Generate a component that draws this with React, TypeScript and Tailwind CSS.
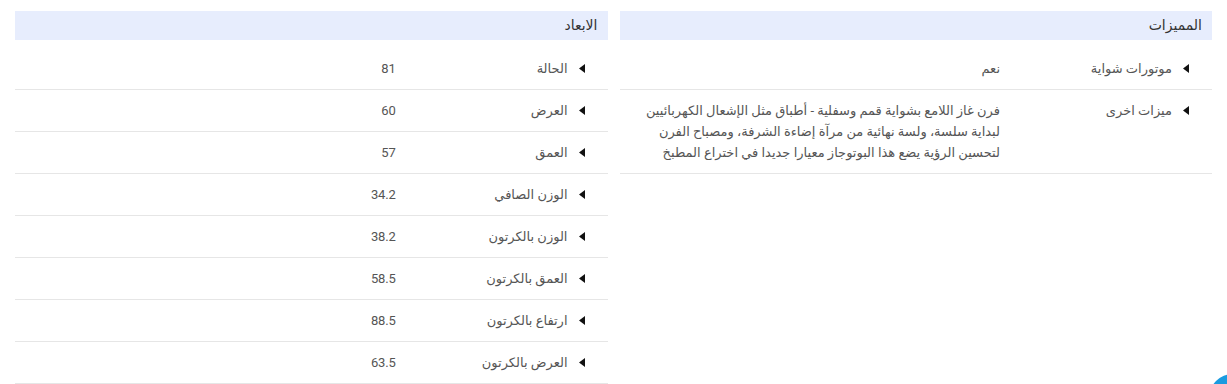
import React from "react";

type Row = { label: string; value: string };

const features: Row[] = [
  { label: "موتورات شواية", value: "نعم" },
  {
    label: "ميزات اخرى",
    value:
      "فرن غاز اللامع بشواية قمم وسفلية - أطباق مثل الإشعال الكهربائيين لبداية سلسة، ولسة نهائية من مرآة إضاءة الشرفة، ومصباح الفرن لتحسين الرؤية يضع هذا البوتوجاز معيارا جديدا في اختراع المطبخ",
  },
];

const dimensions: Row[] = [
  { label: "الحالة", value: "81" },
  { label: "العرض", value: "60" },
  { label: "العمق", value: "57" },
  { label: "الوزن الصافي", value: "34.2" },
  { label: "الوزن بالكرتون", value: "38.2" },
  { label: "العمق بالكرتون", value: "58.5" },
  { label: "ارتفاع بالكرتون", value: "88.5" },
  { label: "العرض بالكرتون", value: "63.5" },
];

function Arrow() {
  return (
    <svg width="6" height="9" viewBox="0 0 6 9" className="shrink-0 mt-[6px]">
      <path d="M6 0 L0 4.5 L6 9 Z" fill="#111" />
    </svg>
  );
}

function SpecTable({ title, rows }: { title: string; rows: Row[] }) {
  return (
    <div className="flex-1 min-w-0">
      <div className="h-[29px] bg-[#e7edfd] pr-[10px] flex items-center text-[14px] text-[#333]">
        {title}
      </div>
      <div className="pt-[8px]">
        {rows.map((row) => (
          <div
            key={row.label}
            className="flex items-start border-b border-[#e6e6e6] py-[10px] text-[13px] leading-[21px]"
          >
            <div className="w-[212px] shrink-0 flex items-start gap-[11px] pr-[23px] text-[#555]">
              <Arrow />
              <span>{row.label}</span>
            </div>
            <div className="flex-1 pl-[2px] text-[#555] tracking-[-0.2px]">{row.value}</div>
          </div>
        ))}
      </div>
    </div>
  );
}

export default function App() {
  return (
    <div
      dir="rtl"
      className="relative w-[1227px] h-[384px] overflow-hidden bg-white"
      style={{ fontFamily: 'Roboto, "DejaVu Sans", sans-serif' }}
    >
      <div className="flex gap-3 px-[15px] pt-[11px]">
        <SpecTable title="المميزات" rows={features} />
        <SpecTable title="الابعاد" rows={dimensions} />
      </div>
      <div className="absolute right-[-30px] bottom-[-38px] w-[48px] h-[48px] rounded-full bg-[#1a9be0]" />
    </div>
  );
}
